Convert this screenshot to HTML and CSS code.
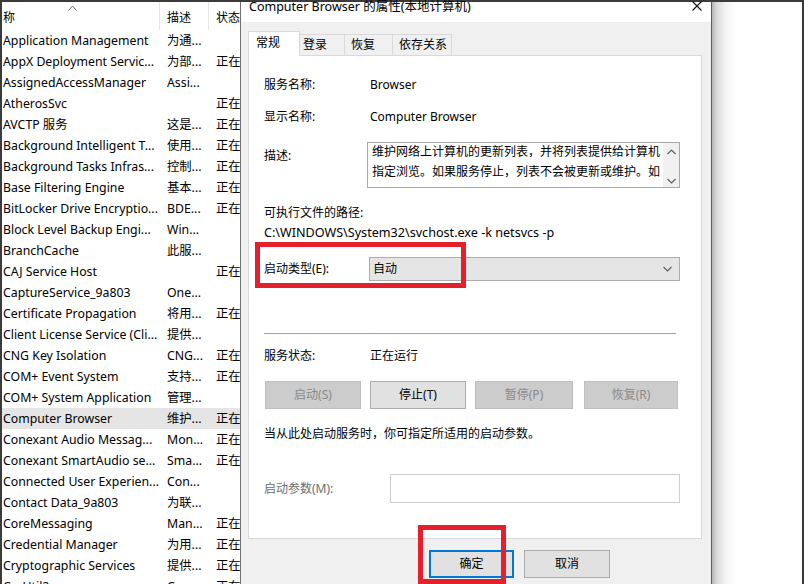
FILE: index.html
```html
<!DOCTYPE html>
<html lang="zh-CN">
<head>
<meta charset="utf-8">
<title>Computer Browser 的属性</title>
<link rel="stylesheet" href="styles.css">
</head>
<body>
<div class="screen">
  <section class="services">
    <div class="svc-head">
      <div class="hcell hname"><svg class="sort" width="9" height="6" viewBox="0 0 9 6"><path d="M0.5 5.5 L4.5 1 L8.5 5.5" fill="none" stroke="#6a6a6a" stroke-width="1"/></svg>称</div>
      <div class="hcell hdesc">描述</div>
      <div class="hcell hstat">状态</div>
    </div>
    <div class="svc-list">
      <div class="row"><span>Application Management</span><span>为通...</span><span></span></div>
      <div class="row"><span>AppX Deployment Servic...</span><span>为部...</span><span>正在</span></div>
      <div class="row"><span>AssignedAccessManager</span><span>Assi...</span><span></span></div>
      <div class="row"><span>AtherosSvc</span><span></span><span>正在</span></div>
      <div class="row"><span>AVCTP 服务</span><span>这是...</span><span>正在</span></div>
      <div class="row"><span>Background Intelligent T...</span><span>使用...</span><span>正在</span></div>
      <div class="row"><span>Background Tasks Infras...</span><span>控制...</span><span>正在</span></div>
      <div class="row"><span>Base Filtering Engine</span><span>基本...</span><span>正在</span></div>
      <div class="row"><span>BitLocker Drive Encryptio...</span><span>BDE...</span><span>正在</span></div>
      <div class="row"><span>Block Level Backup Engi...</span><span>Win...</span><span></span></div>
      <div class="row"><span>BranchCache</span><span>此服...</span><span></span></div>
      <div class="row"><span>CAJ Service Host</span><span></span><span>正在</span></div>
      <div class="row"><span>CaptureService_9a803</span><span>One...</span><span></span></div>
      <div class="row"><span>Certificate Propagation</span><span>将用...</span><span>正在</span></div>
      <div class="row"><span>Client License Service (Cli...</span><span>提供...</span><span></span></div>
      <div class="row"><span>CNG Key Isolation</span><span>CNG...</span><span>正在</span></div>
      <div class="row"><span>COM+ Event System</span><span>支持...</span><span>正在</span></div>
      <div class="row"><span>COM+ System Application</span><span>管理...</span><span></span></div>
      <div class="row sel"><span>Computer Browser</span><span>维护...</span><span>正在</span></div>
      <div class="row"><span>Conexant Audio Messag...</span><span>Mon...</span><span>正在</span></div>
      <div class="row"><span>Conexant SmartAudio se...</span><span>Sma...</span><span>正在</span></div>
      <div class="row"><span>Connected User Experien...</span><span>Con...</span><span></span></div>
      <div class="row"><span>Contact Data_9a803</span><span>为联...</span><span></span></div>
      <div class="row"><span>CoreMessaging</span><span>Man...</span><span>正在</span></div>
      <div class="row"><span>Credential Manager</span><span>为用...</span><span>正在</span></div>
      <div class="row"><span>Cryptographic Services</span><span>提供...</span><span>正在</span></div>
      <div class="row"><span>CscUtil2</span><span>Co...</span><span>正在</span></div>
    </div>
  </section>

  <section class="dialog">
    <div class="titlebar">
      <span class="title">Computer Browser 的属性(本地计算机)</span>
      <svg class="close" width="10" height="10" viewBox="0 0 10 10"><path d="M0.5 0.5 L9.5 9.5 M9.5 0.5 L0.5 9.5" stroke="#111" stroke-width="1.1" fill="none"/></svg>
    </div>
    <div class="dlg-body">
      <div class="tabs">
        <div class="tab active">常规</div>
        <div class="tab t-login">登录</div>
        <div class="tab t-recover">恢复</div>
        <div class="tab t-deps">依存关系</div>
      </div>
      <div class="panel">
        <div class="field f-name"><span>服务名称:</span><span>Browser</span></div>
        <div class="field f-display"><span>显示名称:</span><span>Computer Browser</span></div>
        <div class="field f-desc">
          <span class="desc-label">描述:</span>
          <div class="textbox">
            <div class="textbox-text">维护网络上计算机的更新列表，并将列表提供给计算机指定浏览。如果服务停止，列表不会被更新或维护。如果服务被禁用，任何直接依赖于此服务的服务将无法启动。</div>
            <div class="vscroll">
              <svg width="9" height="6" viewBox="0 0 9 6"><path d="M0.5 5 L4.5 1 L8.5 5" fill="none" stroke="#606060" stroke-width="1.2"/></svg>
              <svg width="9" height="6" viewBox="0 0 9 6"><path d="M0.5 1 L4.5 5 L8.5 1" fill="none" stroke="#606060" stroke-width="1.2"/></svg>
            </div>
          </div>
        </div>
        <div class="line path-label">可执行文件的路径:</div>
        <div class="line path-value">C:\WINDOWS\System32\svchost.exe -k netsvcs -p</div>
        <div class="field f-startup">
          <span>启动类型(E):</span>
          <div class="select"><span>自动</span><svg width="9" height="6" viewBox="0 0 9 6"><path d="M0.5 1 L4.5 5 L8.5 1" fill="none" stroke="#5a5a5a" stroke-width="1.1"/></svg></div>
        </div>
        <div class="sep"></div>
        <div class="field f-status"><span>服务状态:</span><span>正在运行</span></div>
        <div class="svc-buttons">
          <div class="btn disabled">启动(S)</div>
          <div class="btn">停止(T)</div>
          <div class="btn disabled">暂停(P)</div>
          <div class="btn disabled">恢复(R)</div>
        </div>
        <div class="line hint">当从此处启动服务时，你可指定所适用的启动参数。</div>
        <div class="field f-params">
          <span class="muted">启动参数(M):</span>
          <div class="input"></div>
        </div>
      </div>
      <div class="actions">
        <div class="btn primary">确定</div>
        <div class="btn cancel">取消</div>
      </div>
    </div>
  </section>

  <div class="backdrop"></div>
</div>
<div class="mark mark-startup"></div>
<div class="mark mark-ok"></div>
</body>
</html>
```

FILE: styles.css
```css
* { box-sizing: border-box; }

body {
  margin: 0;
  width: 804px;
  height: 584px;
  overflow: hidden;
  position: relative;
  background: #fff;
  color: #000;
  font-family: "Noto Sans", "Noto Sans CJK SC", sans-serif;
  font-size: 12px;
}

.screen {
  display: flex;
  height: 584px;
  border: 2px solid #3b3b3b;
  border-bottom: 0;
}

/* ---------- services list ---------- */
.services {
  width: 238px;
  flex: none;
  overflow: hidden;
  background: #fff;
}

.svc-head {
  display: grid;
  grid-template-columns: 158px 49px 1fr;
  height: 28px;
}

.hcell {
  position: relative;
  padding-top: 8px;
  line-height: 16px;
  white-space: nowrap;
  border-right: 1px solid #e5e5e5;
}

.hname { padding-left: 1px; }
.hdesc { padding-left: 7px; }
.hstat { padding-left: 7px; border-right: 0; }

.sort {
  position: absolute;
  left: 66px;
  top: 3px;
}

.row {
  display: grid;
  grid-template-columns: 163px 49px 1fr;
  height: 21px;
  line-height: 21px;
  white-space: nowrap;
  font-size: 12.3px;
}

.row span { overflow: hidden; }
.row span:nth-child(1) { padding-left: 1px; }
.row span:nth-child(2) { padding-left: 2px; }
.row span:nth-child(3) { padding-left: 2px; }

.row.sel { background: #e5e5e5; }

/* ---------- dialog ---------- */
.dialog {
  width: 472px;
  flex: none;
  display: flex;
  flex-direction: column;
  background: #f0f0f0;
  border-left: 1px solid #707070;
  border-right: 1px solid #5c5c5c;
}

.titlebar {
  height: 20px;
  flex: none;
  background: #fff;
  display: flex;
  justify-content: space-between;
  align-items: flex-start;
  padding: 0 9px 0 8px;
  line-height: 10px;
  font-size: 12.5px;
}

.close { margin-top: -1px; }

.dlg-body {
  padding: 9px 9px 0 7px;
}

.tabs {
  display: flex;
  align-items: flex-end;
  height: 24px;
  position: relative;
  z-index: 1;
}

.tab {
  height: 21px;
  line-height: 20px;
  border: 1px solid #d9d9d9;
  border-left: 0;
  border-bottom: 0;
  background: #f0f0f0;
  white-space: nowrap;
}

.tab.active {
  width: 52px;
  height: 25px;
  line-height: 22px;
  margin-bottom: -1px;
  padding-left: 7px;
  background: #fff;
  border-left: 1px solid #d9d9d9;
}

.t-login { width: 45px; padding-left: 3px; }
.t-recover { width: 48px; padding-left: 6px; }
.t-deps { width: 59px; padding-left: 6px; }

.panel {
  height: 484px;
  background: #fff;
  border: 1px solid #d9d9d9;
  padding: 0 21px 0 15px;
}

.field {
  display: grid;
  grid-template-columns: 106px 1fr;
  align-items: center;
  line-height: 16px;
}

.line { line-height: 16px; white-space: nowrap; }

.f-name { margin-top: 21px; }
.f-display { margin-top: 16px; }

.f-desc {
  margin-top: 17px;
  align-items: start;
}

.desc-label { padding-top: 6px; }

.textbox {
  margin-left: -3px;
  height: 46px;
  border: 1px solid #a9a9a9;
  display: flex;
  overflow: hidden;
}

.textbox-text {
  flex: 1;
  padding-left: 4px;
  line-height: 20px;
  margin-top: -1px;
  overflow: hidden;
  height: 40px;
}

.vscroll {
  width: 16px;
  flex: none;
  background: #f0f0f0;
  display: flex;
  flex-direction: column;
  align-items: center;
  justify-content: space-between;
  padding: 6px 0 3px;
}

.path-label { margin-top: 17px; }
.path-value { margin-top: 4px; font-size: 12.6px; }

.f-startup { margin-top: 16px; }

.select {
  margin-left: -1px;
  height: 24px;
  background: #e5e5e5;
  border: 1px solid #adadad;
  display: flex;
  align-items: center;
  justify-content: space-between;
  padding: 0 7px 0 3px;
}

.sep {
  margin-top: 52px;
  margin-right: 4px;
  height: 1px;
  background: #a0a0a0;
}

.f-status { margin-top: 14px; }

.svc-buttons {
  margin-top: 17px;
  margin-left: 1px;
  display: grid;
  grid-template-columns: 96px 96px 98px 96px;
  column-gap: 9px;
}

.btn {
  height: 28px;
  line-height: 26px;
  text-align: center;
  background: #e1e1e1;
  border: 1px solid #adadad;
  white-space: nowrap;
}

.btn.disabled {
  background: #cccccc;
  border-color: #bfbfbf;
  color: #8a8a8a;
}

.svc-buttons .btn:nth-child(4) { margin-left: 2px; }

.hint { margin-top: 17px; }

.f-params {
  margin-top: 32px;
  grid-template-columns: 126px 1fr;
}

.muted { color: #6d6d6d; }

.input {
  height: 29px;
  border: 1px solid #cfcfcf;
  background: #fff;
}

.actions {
  margin-top: 11px;
  margin-left: 181px;
  display: flex;
  gap: 10px;
}

.btn.primary {
  width: 85px;
  border: 2px solid #0078d7;
  line-height: 24px;
}

.btn.cancel { width: 86px; }

/* ---------- backdrop ---------- */
.backdrop {
  flex: 1;
  background: linear-gradient(to right, #b4b4b4 0, #dcdcdc 5px, #f4f4f4 14px, #fff 24px);
}

/* ---------- annotation marks ---------- */
.mark {
  position: absolute;
  border: 5px solid #e3202b;
}

.mark-startup {
  left: 255px;
  top: 242px;
  width: 211px;
  height: 46px;
}

.mark-ok {
  left: 418px;
  top: 525px;
  width: 88px;
  height: 59px;
}
```
